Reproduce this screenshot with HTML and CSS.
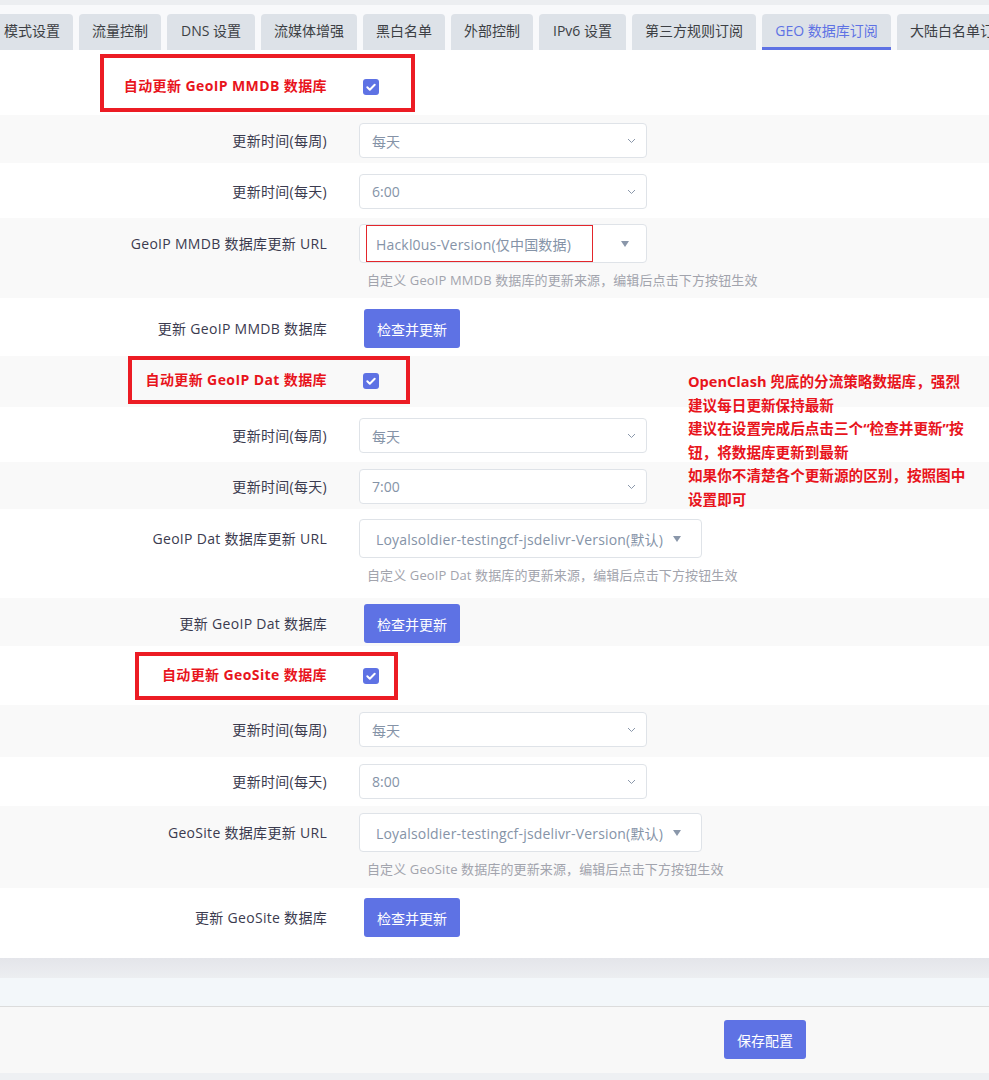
FILE: index.html
```html
<!DOCTYPE html>
<html lang="zh-CN">
<head>
<meta charset="utf-8">
<title>GEO 数据库订阅</title>
<link rel="stylesheet" href="styles.css">
</head>
<body>
<div class="topbar"></div>
<nav class="tabs">
  <span class="tab first">模式设置</span>
  <span class="tab">流量控制</span>
  <span class="tab">DNS 设置</span>
  <span class="tab">流媒体增强</span>
  <span class="tab">黑白名单</span>
  <span class="tab">外部控制</span>
  <span class="tab">IPv6 设置</span>
  <span class="tab">第三方规则订阅</span>
  <span class="tab active">GEO 数据库订阅</span>
  <span class="tab last">大陆白名单订阅</span>
</nav>

<div class="section">
  <div class="row check-row">
    <div class="label red">自动更新 GeoIP MMDB 数据库</div>
    <div class="field"><span class="checkbox"><svg width="16" height="16" viewBox="0 0 16 16"><path d="M4.3 8.3l2.5 2.4 4.9-5" fill="none" stroke="#fff" stroke-width="2" stroke-linecap="round" stroke-linejoin="round"/></svg></span></div>
    <div class="mark mark-1"></div>
  </div>
  <div class="row">
    <div class="label">更新时间(每周)</div>
    <div class="field"><div class="select">每天<svg class="chev" width="9" height="6" viewBox="0 0 9 6"><path d="M1 1l3.5 3.5L8 1" fill="none" stroke="#8a97aa" stroke-width="1"/></svg></div></div>
  </div>
  <div class="row">
    <div class="label">更新时间(每天)</div>
    <div class="field"><div class="select">6:00<svg class="chev" width="9" height="6" viewBox="0 0 9 6"><path d="M1 1l3.5 3.5L8 1" fill="none" stroke="#8a97aa" stroke-width="1"/></svg></div></div>
  </div>
  <div class="row">
    <div class="label tall">GeoIP MMDB 数据库更新 URL</div>
    <div class="field">
      <div class="dropdown">Hackl0us-Version(仅中国数据)<svg class="tri" width="8" height="6" viewBox="0 0 8 6"><path d="M0 0h8L4 6z" fill="#8a97aa"/></svg><span class="mark-thin"></span></div>
      <div class="help">自定义 GeoIP MMDB 数据库的更新来源，编辑后点击下方按钮生效</div>
    </div>
  </div>
  <div class="row">
    <div class="label tall">更新 GeoIP MMDB 数据库</div>
    <div class="field"><button class="btn">检查并更新</button></div>
  </div>

  <div class="row check-row">
    <div class="label red">自动更新 GeoIP Dat 数据库</div>
    <div class="field"><span class="checkbox"><svg width="16" height="16" viewBox="0 0 16 16"><path d="M4.3 8.3l2.5 2.4 4.9-5" fill="none" stroke="#fff" stroke-width="2" stroke-linecap="round" stroke-linejoin="round"/></svg></span></div>
    <div class="mark mark-2"></div>
  </div>
  <div class="row">
    <div class="label">更新时间(每周)</div>
    <div class="field"><div class="select">每天<svg class="chev" width="9" height="6" viewBox="0 0 9 6"><path d="M1 1l3.5 3.5L8 1" fill="none" stroke="#8a97aa" stroke-width="1"/></svg></div></div>
  </div>
  <div class="row">
    <div class="label">更新时间(每天)</div>
    <div class="field"><div class="select">7:00<svg class="chev" width="9" height="6" viewBox="0 0 9 6"><path d="M1 1l3.5 3.5L8 1" fill="none" stroke="#8a97aa" stroke-width="1"/></svg></div></div>
  </div>
  <div class="row">
    <div class="label tall">GeoIP Dat 数据库更新 URL</div>
    <div class="field">
      <div class="dropdown wide">Loyalsoldier-testingcf-jsdelivr-Version(默认)<svg class="tri" width="8" height="6" viewBox="0 0 8 6"><path d="M0 0h8L4 6z" fill="#8a97aa"/></svg></div>
      <div class="help">自定义 GeoIP Dat 数据库的更新来源，编辑后点击下方按钮生效</div>
    </div>
  </div>
  <div class="row">
    <div class="label tall">更新 GeoIP Dat 数据库</div>
    <div class="field"><button class="btn">检查并更新</button></div>
  </div>

  <div class="row check-row">
    <div class="label red">自动更新 GeoSite 数据库</div>
    <div class="field"><span class="checkbox"><svg width="16" height="16" viewBox="0 0 16 16"><path d="M4.3 8.3l2.5 2.4 4.9-5" fill="none" stroke="#fff" stroke-width="2" stroke-linecap="round" stroke-linejoin="round"/></svg></span></div>
    <div class="mark mark-3"></div>
  </div>
  <div class="row">
    <div class="label">更新时间(每周)</div>
    <div class="field"><div class="select">每天<svg class="chev" width="9" height="6" viewBox="0 0 9 6"><path d="M1 1l3.5 3.5L8 1" fill="none" stroke="#8a97aa" stroke-width="1"/></svg></div></div>
  </div>
  <div class="row">
    <div class="label">更新时间(每天)</div>
    <div class="field"><div class="select">8:00<svg class="chev" width="9" height="6" viewBox="0 0 9 6"><path d="M1 1l3.5 3.5L8 1" fill="none" stroke="#8a97aa" stroke-width="1"/></svg></div></div>
  </div>
  <div class="row">
    <div class="label tall">GeoSite 数据库更新 URL</div>
    <div class="field">
      <div class="dropdown wide">Loyalsoldier-testingcf-jsdelivr-Version(默认)<svg class="tri" width="8" height="6" viewBox="0 0 8 6"><path d="M0 0h8L4 6z" fill="#8a97aa"/></svg></div>
      <div class="help">自定义 GeoSite 数据库的更新来源，编辑后点击下方按钮生效</div>
    </div>
  </div>
  <div class="row">
    <div class="label tall">更新 GeoSite 数据库</div>
    <div class="field"><button class="btn">检查并更新</button></div>
  </div>

  <div class="note">
    <p>OpenClash 兜底的分流策略数据库，强烈<br>建议每日更新保持最新</p>
    <p>建议在设置完成后点击三个“检查并更新”按<br>钮，将数据库更新到最新</p>
    <p>如果你不清楚各个更新源的区别，按照图中<br>设置即可</p>
  </div>
</div>

<div class="foot-shadow"></div>
<div class="foot-blue"></div>
<div class="actions"><button class="btn save">保存配置</button></div>
<div class="foot-end"></div>
</body>
</html>
```

FILE: styles.css
```css
html, body {
  margin: 0;
  padding: 0;
  background: #eef0f3;
}
body {
  font-family: "Open Sans", "Noto Sans CJK SC", sans-serif;
  font-size: 14px;
  color: #3b3b4f;
  overflow: hidden;
}

.topbar {
  height: 5px;
  background: #eceef1;
}

.tabs {
  display: flex;
  gap: 6px;
  padding-top: 9px;
  background: #f8f9fb;
  white-space: nowrap;
  overflow: hidden;
}
.tab {
  flex: none;
  height: 36px;
  line-height: 34px;
  text-align: center;
  background: #dde2e8;
  border-radius: 4px 4px 0 0;
  color: #3c3f44;
  font-size: 14px;
  box-sizing: border-box;
}
.tab:nth-child(2) { width: 82px; }
.tab:nth-child(3) { width: 88px; }
.tab:nth-child(4) { width: 96px; }
.tab:nth-child(5) { width: 82px; }
.tab:nth-child(6) { width: 82px; }
.tab:nth-child(7) { width: 87px; }
.tab:nth-child(8) { width: 124px; }
.tab:nth-child(9) { width: 129px; }
.tab.first {
  width: 73px;
  padding-left: 4px;
  text-align: left;
  border-radius: 0 4px 0 0;
}
.tab.last {
  flex: 1 0 auto;
  padding-left: 13px;
  text-align: left;
  overflow: hidden;
}
.tab.active {
  color: #5e72e4;
  box-shadow: inset 0 -3px 0 #5e72e4;
}

.section {
  position: relative;
  background: #fff;
}

.row {
  position: relative;
  display: flex;
  align-items: flex-start;
  box-sizing: border-box;
  background: #fff;
}
.row:nth-child(even) { background: #f9f9f9; }

.row:nth-child(1)  { height: 65px; padding-top: 26px; }
.row:nth-child(2)  { height: 48px; padding-top: 8px; }
.row:nth-child(3)  { height: 55px; padding-top: 11px; }
.row:nth-child(4)  { height: 80px; padding-top: 6px; }
.row:nth-child(5)  { height: 58px; padding-top: 11px; }
.row:nth-child(6)  { height: 51px; padding-top: 14px; }
.row:nth-child(7)  { height: 55px; padding-top: 11px; }
.row:nth-child(8)  { height: 47px; padding-top: 7px; }
.row:nth-child(9)  { height: 89px; padding-top: 10px; }
.row:nth-child(10) { height: 48px; padding-top: 6px; }
.row:nth-child(11) { height: 59px; padding-top: 19px; }
.row:nth-child(12) { height: 52px; padding-top: 7px; }
.row:nth-child(13) { height: 49px; padding-top: 7px; }
.row:nth-child(14) { height: 82px; padding-top: 7px; }
.row:nth-child(15) { height: 70px; padding-top: 10px; }

.label {
  flex: none;
  width: 327px;
  text-align: right;
  line-height: 35px;
  white-space: nowrap;
  letter-spacing: 0.3px;
}
.label.tall { line-height: 39px; }
.check-row .label { line-height: 20px; }
.label.red {
  color: #e8141c;
  font-weight: 700;
  letter-spacing: 0.4px;
}

.field {
  margin-left: 32px;
}
.check-row .field {
  height: 20px;
  display: flex;
  align-items: center;
  padding-left: 4px;
}

.checkbox {
  width: 16px;
  height: 16px;
  margin-top: 2px;
  border-radius: 3px;
  background: #5e72e4;
  display: block;
}
.checkbox svg { display: block; }

.select {
  width: 288px;
  height: 35px;
  box-sizing: border-box;
  border: 1px solid #dfe3e8;
  border-radius: 4px;
  background: #fff;
  padding: 0 10px 0 12px;
  display: flex;
  align-items: center;
  justify-content: space-between;
  color: #8593a7;
  font-size: 14px;
}
.chev { display: block; }

.dropdown {
  position: relative;
  width: 288px;
  height: 39px;
  box-sizing: border-box;
  border: 1px solid #dfe3e8;
  border-radius: 4px;
  background: #fff;
  padding: 0 17px 0 16px;
  display: flex;
  align-items: center;
  justify-content: space-between;
  color: #8593a7;
  font-size: 14px;
  letter-spacing: 0.18px;
  white-space: nowrap;
}
.dropdown.wide { width: 343px; padding-right: 20px; }
.tri { display: block; flex: none; }

.mark-thin {
  position: absolute;
  left: 6px;
  top: 0;
  width: 227px;
  height: 37px;
  box-sizing: border-box;
  border: 1px solid #e3262b;
}

.help {
  margin: 9px 0 0 8px;
  font-size: 13px;
  line-height: 16px;
  color: #a2a4ad;
  letter-spacing: 0.12px;
  white-space: nowrap;
}

.btn {
  font-family: inherit;
  border: none;
  border-radius: 3px;
  background: #5e72e4;
  color: #fff;
  font-size: 14px;
  height: 39px;
  padding: 0;
  cursor: pointer;
}
.field .btn {
  width: 96px;
  margin-left: 5px;
  display: block;
}

.mark {
  position: absolute;
  box-sizing: border-box;
  border: 4px solid #ec1c24;
  pointer-events: none;
}
.mark-1 { left: 100px; top: 4px; width: 315px; height: 58px; }
.mark-2 { left: 128px; top: 0; width: 282px; height: 48px; }
.mark-3 { left: 135px; top: 6px; width: 263px; height: 48px; }

.note {
  position: absolute;
  left: 688px;
  top: 320px;
  color: #e8141c;
  font-weight: 700;
  font-size: 14.6px;
  line-height: 23.6px;
  white-space: nowrap;
}
.note p { margin: 0; }

.foot-shadow {
  height: 20px;
  background: linear-gradient(#e4e5ea, #eceef1);
}
.foot-blue {
  height: 28px;
  background: #f3f7fa;
  border-bottom: 1px solid #dcdcdc;
}
.actions {
  height: 66px;
  box-sizing: border-box;
  padding: 13px 0 0 724px;
  background: #f8f8f8;
}
.btn.save {
  width: 82px;
  display: block;
}
.foot-end {
  height: 20px;
  background: #eef0f3;
}
```
